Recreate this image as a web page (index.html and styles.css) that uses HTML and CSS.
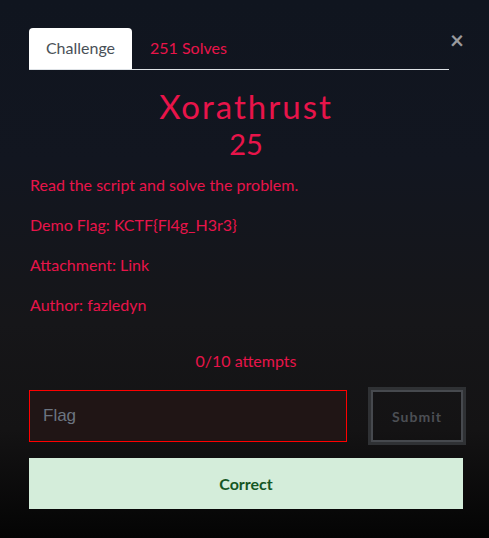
FILE: index.html
```html
<!DOCTYPE html>
<html>
<head>
<meta charset="utf-8">
<link rel="stylesheet" href="styles.css">
</head>
<body>
<div class="modal">
  <div class="top">
    <ul class="tabs">
      <li class="tab active">Challenge</li>
      <li class="tab">251 Solves</li>
    </ul>
    <span class="close">&times;</span>
  </div>
  <div class="content">
    <h2 class="title">Xorathrust</h2>
    <h3 class="value">25</h3>
    <div class="desc">
      <p>Read the script and solve the problem.</p>
      <p>Demo Flag: KCTF{Fl4g_H3r3}</p>
      <p>Attachment: Link</p>
      <p>Author: fazledyn</p>
    </div>
    <p class="attempts">0/10 attempts</p>
    <div class="form-row">
      <input class="flag" type="text" placeholder="Flag">
      <button class="submit">Submit</button>
    </div>
    <div class="alert">Correct</div>
  </div>
</div>
</body>
</html>
```
FILE: styles.css
```css
html, body {
  margin: 0;
  padding: 0;
  height: 100%;
}
body {
  background: linear-gradient(to bottom, #10151f 0%, #121620 30%, #161619 60%, #141314 80%, #040404 100%);
  font-family: Lato, "Open Sans", sans-serif;
  color: #e8144a;
  overflow: hidden;
}
.modal {
  padding: 28px 26px 0 29px;
}
.top {
  display: flex;
  align-items: flex-start;
}
.tabs {
  list-style: none;
  margin: 0;
  padding: 0;
  display: flex;
  width: 420px;
  border-bottom: 1px solid #dee2e6;
}
.tab {
  font-size: 16px;
  line-height: 22px;
  padding: 9px 18px 10px;
  color: #e8144a;
}
.tab.active {
  background: #fff;
  color: #495057;
  border-radius: 4px 4px 0 0;
  padding: 9px 0 10px;
  width: 103px;
  text-align: center;
}
.close {
  margin-left: 1px;
  margin-top: -2px;
  font-size: 24px;
  font-weight: 700;
  line-height: 28px;
  color: #999a9d;
  width: 13px;
  text-align: center;
}
.content {
  width: 434px;
}
.title {
  margin: 16px 0 0;
  text-align: center;
  font-weight: 400;
  font-size: 33px;
  line-height: 40px;
  letter-spacing: 2px;
}
.value {
  margin: 0;
  text-align: center;
  font-weight: 400;
  font-size: 29px;
  line-height: 36px;
}
.desc {
  margin-top: 11px;
}
.desc p {
  margin: 0 0 16px 1px;
  font-size: 16px;
  line-height: 24px;
}
.attempts {
  margin: 32px 0 0;
  text-align: center;
  font-size: 16px;
  line-height: 24px;
}
.form-row {
  display: flex;
  justify-content: space-between;
  align-items: center;
  margin-top: 17px;
}
.flag {
  box-sizing: border-box;
  width: 318px;
  height: 52px;
  border: 1px solid #ff0000;
  background: #201515;
  padding: 0 13px;
  font-family: "Liberation Sans", Arial, sans-serif;
  font-size: 17px;
  color: #ccc;
  outline: none;
}
.flag::placeholder {
  color: #6c7480;
}
.submit {
  box-sizing: border-box;
  width: 92px;
  height: 52px;
  border: 2px solid #46494e;
  box-shadow: 0 0 0 3px #2f3134;
  background: transparent;
  color: #4c4f54;
  font-family: Lato, sans-serif;
  font-weight: 700;
  font-size: 14px;
  letter-spacing: 1px;
  margin-right: 0;
}
.alert {
  margin-top: 16px;
  height: 51px;
  background: #d4edda;
  color: #155724;
  font-weight: 700;
  font-size: 16px;
  display: flex;
  align-items: center;
  justify-content: center;
}
```
